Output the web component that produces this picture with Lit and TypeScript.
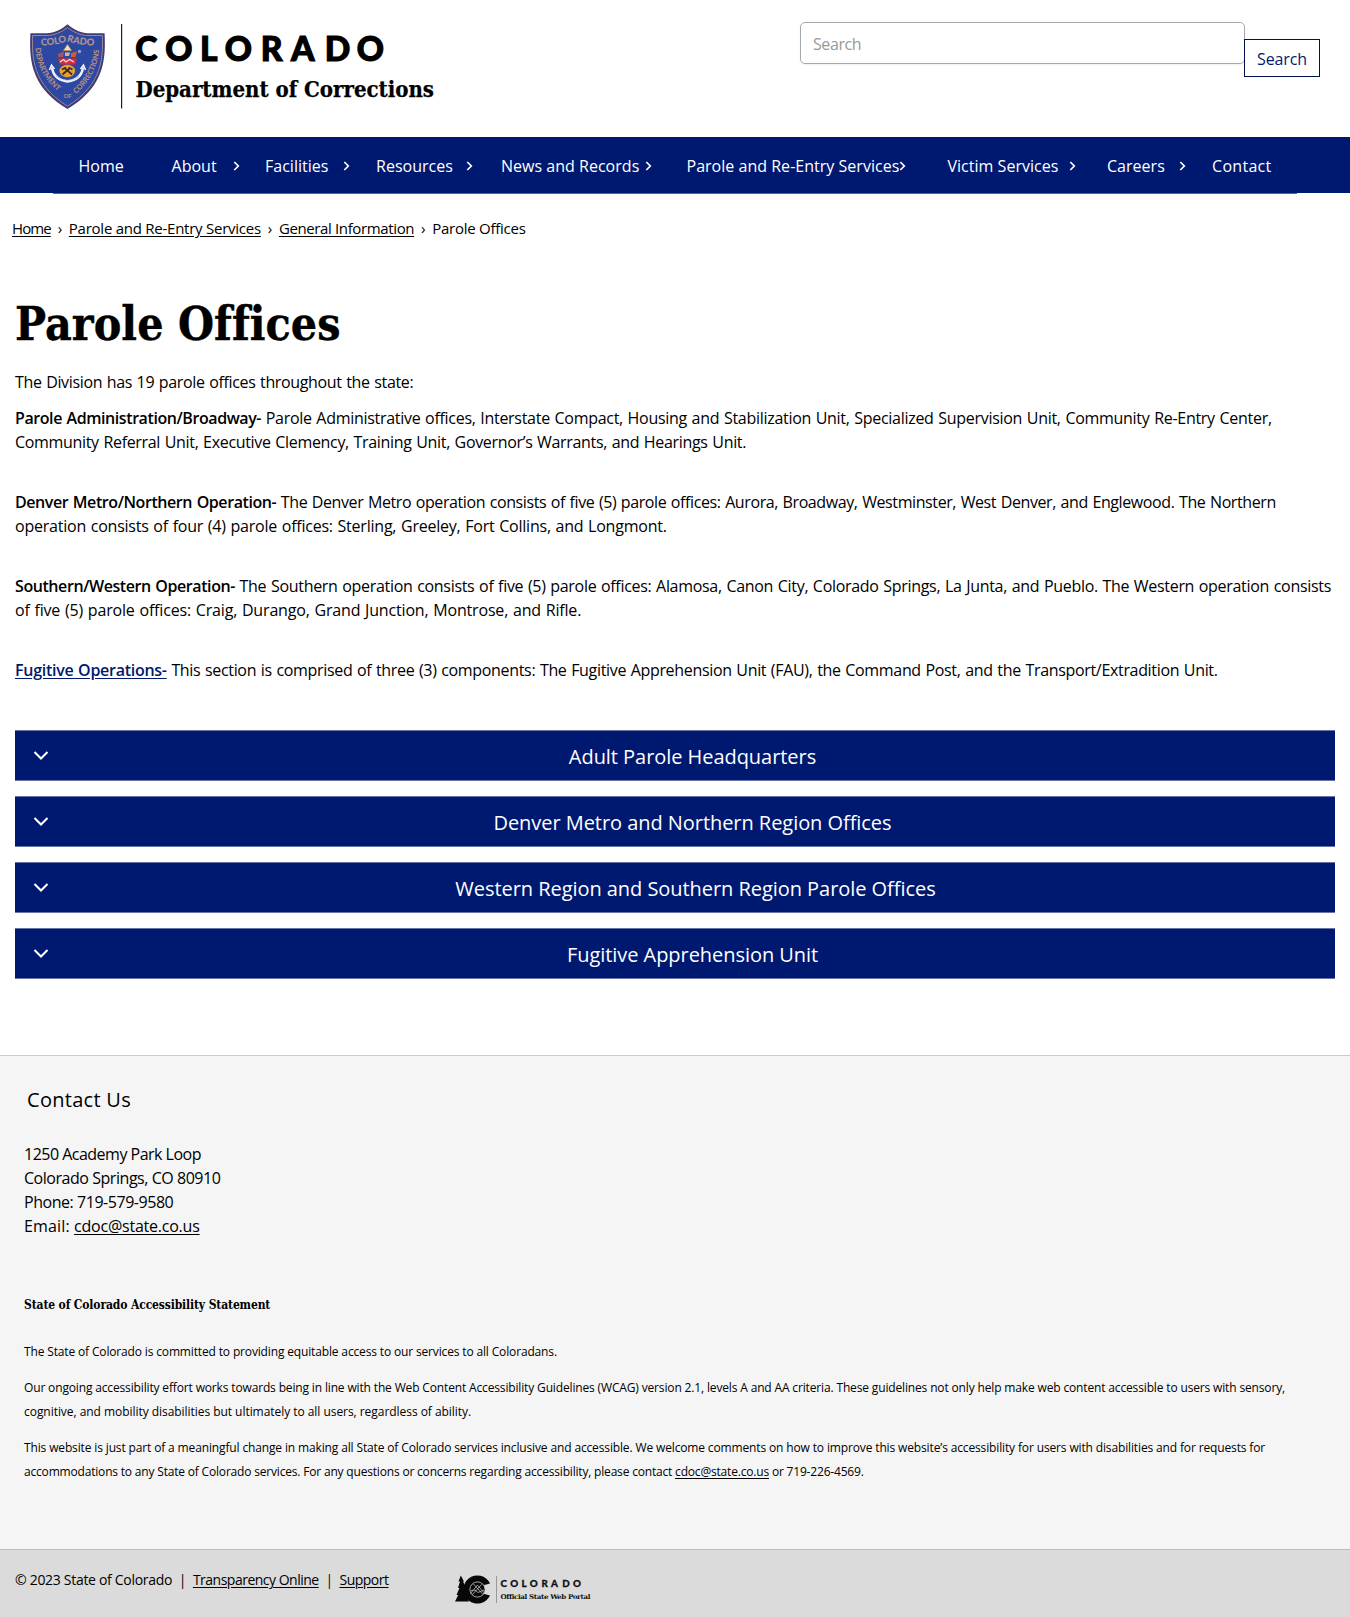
import { LitElement, html, css } from "lit";
import { customElement, property } from "lit/decorators.js";

interface NavItem {
  label: string;
  width: number;
  chevronInset?: number;
}

const NAV: NavItem[] = [
  { label: "Home", width: 93 },
  { label: "About", width: 93.5, chevronInset: 0.5 },
  { label: "Facilities", width: 111, chevronInset: 1 },
  { label: "Resources", width: 125, chevronInset: 3 },
  { label: "News and Records", width: 185.5, chevronInset: 9.5 },
  { label: "Parole and Re-Entry Services", width: 261, chevronInset: 17 },
  { label: "Victim Services", width: 159.5, chevronInset: 6 },
  { label: "Careers", width: 105, chevronInset: 1 },
  { label: "Contact", width: 110 },
];

const SECTIONS = [
  { heading: "Adult Parole Headquarters", shift: 0 },
  { heading: "Denver Metro and Northern Region Offices", shift: 0 },
  { heading: "Western Region and Southern Region Parole Offices", shift: 6 },
  { heading: "Fugitive Apprehension Unit", shift: 0 },
];

@customElement("doc-logo")
class DocLogo extends LitElement {
  static styles = css`
    :host { display: block; }
    .logo { display: block; }
    .word { font: 900 33.5px Lato, "Open Sans", sans-serif; stroke: #000; stroke-width: 1.1px; }
    .dept { font: bold 22px "DejaVu Serif Condensed", "DejaVu Serif", serif; font-stretch: condensed; stroke: #000; stroke-width: 0.25px; }
    .seal-text { font: 900 9.5px Lato, sans-serif; fill: #b39390; }
    .seal-side { font: 900 7.6px Lato, sans-serif; fill: #b08d80; }
    .seal-of { font: 900 6px Lato, sans-serif; fill: #b08d80; }
  `;
  render() {
    return html`<svg class="logo" width="420" height="90" viewBox="30 22 420 90" role="img">
      <path d="M67.5 24.2C74 29.5 81 33.2 88 33.2H104.6C105.5 57 106 86 67.5 109C29 86 29.5 57 30.4 33.2H47C54 33.2 61 29.5 67.5 24.2Z" fill="#3f3d78" />
      <path d="M67.5 27.5C74 32.5 81 35.5 88 35.5H102.4C103 57 103 84 67.5 106.2C32 84 32 57 32.6 35.5H47C54 35.5 61 32.5 67.5 27.5Z" fill="#2c48a2" stroke="#9c8597" stroke-width="1" />
      <path id="top" d="M41 45.5Q54 45.5 67.5 41.5Q81 45.5 96 45.5" fill="none" />
      <path id="left" d="M35.5 48Q37 75 60 93" fill="none" />
      <path id="right" d="M76 94Q98 75 99.500 47" fill="none" />
      <text class="seal-text"><textPath href="#top" textLength="54" lengthAdjust="spacingAndGlyphs">COLORADO</textPath></text>
      <text class="seal-side"><textPath href="#left" textLength="50" lengthAdjust="spacingAndGlyphs">DEPARTMENT</textPath></text>
      <text class="seal-side"><textPath href="#right" textLength="51" lengthAdjust="spacingAndGlyphs">CORRECTIONS</textPath></text>
      <text class="seal-of" x="63.5" y="97.5">OF</text>
      <path d="M67.5 44.5L71.5 50.5H63.5Z" fill="#e9e3cf" stroke="#d9912d" stroke-width=".6" />
      <path d="M58 54L64 51.5L63 57L58.5 57Z" fill="#a9565b" />
      <path d="M65 52.5H70L69 56H65Z" fill="#d9b1a3" />
      <path d="M71 53L77 51.5L75.5 57L71 57Z" fill="#cf5d35" />
      <circle cx="79.5" cy="51.5" r="1.7" fill="#8d9ed5" />
      <path d="M58 58.5H77L75 64.5H60Z" fill="#d92938" />
      <path d="M60 62L63.5 59.5L66 62L69.5 59.5L74 62" fill="none" stroke="#f4dfe4" stroke-width="1.3" />
      <ellipse cx="67.3" cy="71" rx="7.8" ry="6.2" fill="#e8a12c" />
      <path d="M62.5 74.5L70 68M64.5 68L72 74.5M62 69.5L66 67.5M68.5 67.5L72.5 69.5" stroke="#382a2b" stroke-width="1.7" />
      <path d="M52 67.5Q53.5 79.5 67.5 81.5Q81.5 79.5 83 67.5" fill="none" stroke="#eef0fa" stroke-width="2.4" />
      <path d="M49.500 70L51.500 65L54.500 69M80.500 69L83.500 65L85.500 70" fill="none" stroke="#eef0fa" stroke-width="1.6" />
      <path d="M56 76Q67.500 84 79 76" fill="none" stroke="#8b94be" stroke-width=".7" stroke-dasharray="1.5 1" />
      <rect x="121" y="24" width="1.2" height="84.5" fill="#222" />
      <text class="word" x="135.3 165.2 200 224.7 260.8 291 324.8 356.7" y="60.7">COLORADO</text>
      <text class="dept" x="135.5" y="97" textLength="298.500">Department of Corrections</text>
    </svg>`;
  }
}

@customElement("portal-logo")
class PortalLogo extends LitElement {
  static styles = css`
    :host { display: block; }
    .logo { display: block; }
    .word { font: 900 9.8px Lato, sans-serif; fill: #111; stroke: #111; stroke-width: 0.3px; }
    .tag { font: bold 6.6px "DejaVu Serif Condensed", "DejaVu Serif", serif; font-stretch: condensed; fill: #111; }
  `;
  render() {
    return html`<svg class="logo" width="137" height="29" viewBox="0 0 137 29" role="img">
      <path d="M5.8 .5L9 6.5H8L11 12.5H9.5L13 19.5H11L14 26.5H0L3.2 20H1.5L4.5 13H3L5 6.5H3.5Z" fill="#080808" />
      <path d="M35 8.5A14 14 0 1 0 35 20.5L27.5 18.5A6.5 6.5 0 1 1 27.5 10.5Z" fill="#080808" />
      <circle cx="22" cy="14.5" r="8" fill="#080808" />
      <circle cx="22.5" cy="14.5" r="7.6" fill="none" stroke="#d0d0d0" stroke-width=".8" />
      <path d="M15.500 18.500L22.500 10L29.500 18.500M17.500 19.500L26.500 9.500M18.500 9L28 19.500M16 15.500L20 15L23 17.500L29 15" fill="none" stroke="#d0d0d0" stroke-width=".7" />
      <path d="M41.500 1V28" stroke="#999" stroke-width="1" />
      <text class="word" x="45.500 55.300 66.500 74.800 86.400 96 107.200 118" y="11.500">COLORADO</text>
      <text class="tag" x="45.500" y="24" textLength="89.500" lengthAdjust="spacingAndGlyphs">Official State Web Portal</text>
    </svg>`;
  }
}

@customElement("accordion-bar")
class AccordionBar extends LitElement {
  @property() heading = "";
  @property({ type: Number }) shift = 0;
  static styles = css`
    :host { display: block; }
    .bar {
      box-sizing: border-box; height: 51px; display: flex; align-items: center;
      background: #001970; color: #fff; border: solid #6973aa; border-width: 1px 0;
      padding: 0 0 0 18px;
      font: 20px "Open Sans", sans-serif;
    }
    .label { flex: 1; text-align: center; letter-spacing: -0.05px; padding-top: 1px; }
    .chevron { display: block; flex: none; }
  `;
  render() {
    return html`<div class="bar">
      <svg class="chevron" width="17" height="12" viewBox="0 0 17 12"><path d="M1.500 2L8 8.500L14.500 2" fill="none" stroke="#fff" stroke-width="2.100" /></svg>
      <span class="label" style="padding-left:${this.shift}px">${this.heading}</span>
    </div>`;
  }
}

@customElement("app-root")
class AppRoot extends LitElement {
  static styles = css`
    :host { display: block; width: 1350px; height: 1617px; overflow: hidden; background: #fff; color: #000; font: 16px/24px "Open Sans", sans-serif; }
    * { box-sizing: border-box; }
    p { margin: 0; }
    a { color: inherit; text-decoration: underline; text-underline-offset: 2px; }
    .header { height: 137px; display: flex; justify-content: space-between; padding: 22px 30px 0; }
    .search { display: flex; align-items: flex-start; }
    .input { width: 445px; height: 42px; border: 1px solid #a9a9ac; border-radius: 5px; padding: 9px 12px 7px; color: #999; letter-spacing: -0.4px; box-shadow: 0 1px 2px #0001; }
    .submit { width: 76px; height: 38px; margin: 17px 0 0 -1px; border: 1px solid #001050; background: #fff; color: #001970; font: 16px "Open Sans", sans-serif; padding: 1px 0 0; letter-spacing: -0.1px; }
    .nav { height: 56px; background: #001970; display: flex; padding-left: 53.5px; color: #fff; }
    .item { flex: none; display: flex; align-items: center; justify-content: space-between; padding: 1px 0 0 25px; white-space: nowrap; letter-spacing: 0.02px; }
    .item:last-child { letter-spacing: 0.3px; }
    .chev { flex: none; display: block; margin-left: -8px; }
    .rule { height: 1px; margin: 0 53px; background: #5462a4; }
    .crumbs { padding: 22px 12px 0; display: flex; gap: 6.9px; font-size: 15px; letter-spacing: -0.25px; white-space: nowrap; }
    .crumb-home { letter-spacing: -0.9px; }
    .crumb-parent { letter-spacing: -0.37px; }
    h1 { margin: 54px 15px 0; font: bold 46px/60px "DejaVu Serif Condensed", "DejaVu Serif", serif; font-stretch: condensed; letter-spacing: 0.06px; -webkit-text-stroke: 0.4px #000; }
    .body { padding: 16px 15px 0; display: flex; flex-direction: column; gap: 36px; word-spacing: 0.8px; white-space: nowrap; }
    .intro { margin-bottom: -24px; letter-spacing: -0.351px; }
    .admin { letter-spacing: -0.288px; }
    .admin-end { letter-spacing: -0.323px; }
    .denver { letter-spacing: -0.399px; }
    .denver-end { letter-spacing: -0.225px; }
    .south { letter-spacing: -0.305px; }
    .south-end { letter-spacing: -0.17px; }
    .fug { letter-spacing: -0.327px; }
    .body b { font-weight: 600; letter-spacing: -0.42px; }
    .body .fugitive b { letter-spacing: -0.27px; }
    .fugitive { color: #001970; }
    .bars { padding: 48px 15px 0; display: grid; gap: 15px; }
    .footer { margin-top: 76px; height: 494px; background: #f5f5f5; border-top: 1px solid #ccc; padding: 30px 24px 0; white-space: nowrap; }
    .contact { margin: 0 0 0 3px; font: 20px/28px "Open Sans", sans-serif; letter-spacing: 0.28px; }
    .address { margin-top: 28px; letter-spacing: -0.46px; }
    .street { letter-spacing: -0.51px; }
    .email { letter-spacing: 0.15px; }
    .email a { letter-spacing: -0.23px; }
    .statement { margin: 55px 0 0; font: bold 12px/24px "DejaVu Serif Condensed", "DejaVu Serif", serif; font-stretch: condensed; letter-spacing: -0.13px; }
    .fine { margin-top: 23px; font-size: 12px; letter-spacing: -0.15px; display: grid; gap: 12px; }
    .cognitive { letter-spacing: -0.045px; }
    .website { letter-spacing: -0.139px; }
    .accommodations { letter-spacing: -0.185px; }
    .base { height: 68px; border-top: 1px solid #bcbcbc; background: #dbdbdb; display: flex; align-items: flex-start; padding: 18px 15px 0; font-size: 14px; letter-spacing: -0.3px; }
    .base a { letter-spacing: -0.5px; }
    .links { width: 440px; white-space: pre; }
    .portal { padding-top: 7px; }
  `;
  render() {
    return html`
      <header class="header">
        <doc-logo></doc-logo>
        <div class="search">
          <div class="input">Search</div>
          <button class="submit">Search</button>
        </div>
      </header>
      <nav class="nav">
        ${NAV.map((n) => html`<div class="item" style="width:${n.width}px;padding-right:${n.chevronInset ?? 0}px">
          <span>${n.label}</span>
          ${n.chevronInset === undefined ? "" : html`<svg class="chev" width="7" height="10" viewBox="0 0 7 10"><path d="M1.300 1L5.300 5L1.300 9" fill="none" stroke="#fff" stroke-width="1.700" /></svg>`}
        </div>`)}
      </nav>
      <div class="rule"></div>
      <div class="crumbs"><a class="crumb-home">Home</a><span>›</span><a>Parole and Re-Entry Services</a><span>›</span><a class="crumb-parent">General Information</a><span>›</span><span>Parole Offices</span></div>
      <main>
        <h1>Parole Offices</h1>
        <div class="body">
          <p class="intro">The Division has 19 parole offices throughout the state:</p>
          <p><span class="admin"><b>Parole Administration/Broadway-</b> Parole Administrative offices, Interstate Compact, Housing and Stabilization Unit, Specialized Supervision Unit, Community Re-Entry Center,</span><br /><span class="admin-end">Community Referral Unit, Executive Clemency, Training Unit, Governor’s Warrants, and Hearings Unit.</span></p>
          <p><span class="denver"><b>Denver Metro/Northern Operation-</b> The Denver Metro operation consists of five (5) parole offices: Aurora, Broadway, Westminster, West Denver, and Englewood. The Northern</span><br /><span class="denver-end">operation consists of four (4) parole offices: Sterling, Greeley, Fort Collins, and Longmont.</span></p>
          <p><span class="south"><b>Southern/Western Operation-</b> The Southern operation consists of five (5) parole offices: Alamosa, Canon City, Colorado Springs, La Junta, and Pueblo. The Western operation consists</span><br /><span class="south-end">of five (5) parole offices: Craig, Durango, Grand Junction, Montrose, and Rifle.</span></p>
          <p class="fug"><a class="fugitive"><b>Fugitive Operations-</b></a> This section is comprised of three (3) components: The Fugitive Apprehension Unit (FAU), the Command Post, and the Transport/Extradition Unit.</p>
        </div>
        <div class="bars">
          ${SECTIONS.map((s) => html`<accordion-bar .heading=${s.heading} .shift=${s.shift}></accordion-bar>`)}
        </div>
      </main>
      <footer>
        <div class="footer">
          <h2 class="contact">Contact Us</h2>
          <p class="address"><span class="street">1250 Academy Park Loop</span><br />Colorado Springs, CO 80910<br />Phone: 719-579-9580<br /><span class="email">Email: <a>cdoc@state.co.us</a></span></p>
          <h3 class="statement">State of Colorado Accessibility Statement</h3>
          <div class="fine">
            <p>The State of Colorado is committed to providing equitable access to our services to all Coloradans.</p>
            <p>Our ongoing accessibility effort works towards being in line with the Web Content Accessibility Guidelines (WCAG) version 2.1, levels A and AA criteria. These guidelines not only help make web content accessible to users with sensory,<br /><span class="cognitive">cognitive, and mobility disabilities but ultimately to all users, regardless of ability.</span></p>
            <p><span class="website">This website is just part of a meaningful change in making all State of Colorado services inclusive and accessible. We welcome comments on how to improve this website’s accessibility for users with disabilities and for requests for</span><br /><span class="accommodations">accommodations to any State of Colorado services. For any questions or concerns regarding accessibility, please contact <a>cdoc@state.co.us</a> or 719-226-4569.</span></p>
          </div>
        </div>
        <div class="base">
          <div class="links">© 2023 State of Colorado  |  <a>Transparency Online</a>  |  <a>Support</a></div>
          <portal-logo class="portal"></portal-logo>
        </div>
      </footer>
    `;
  }
}
